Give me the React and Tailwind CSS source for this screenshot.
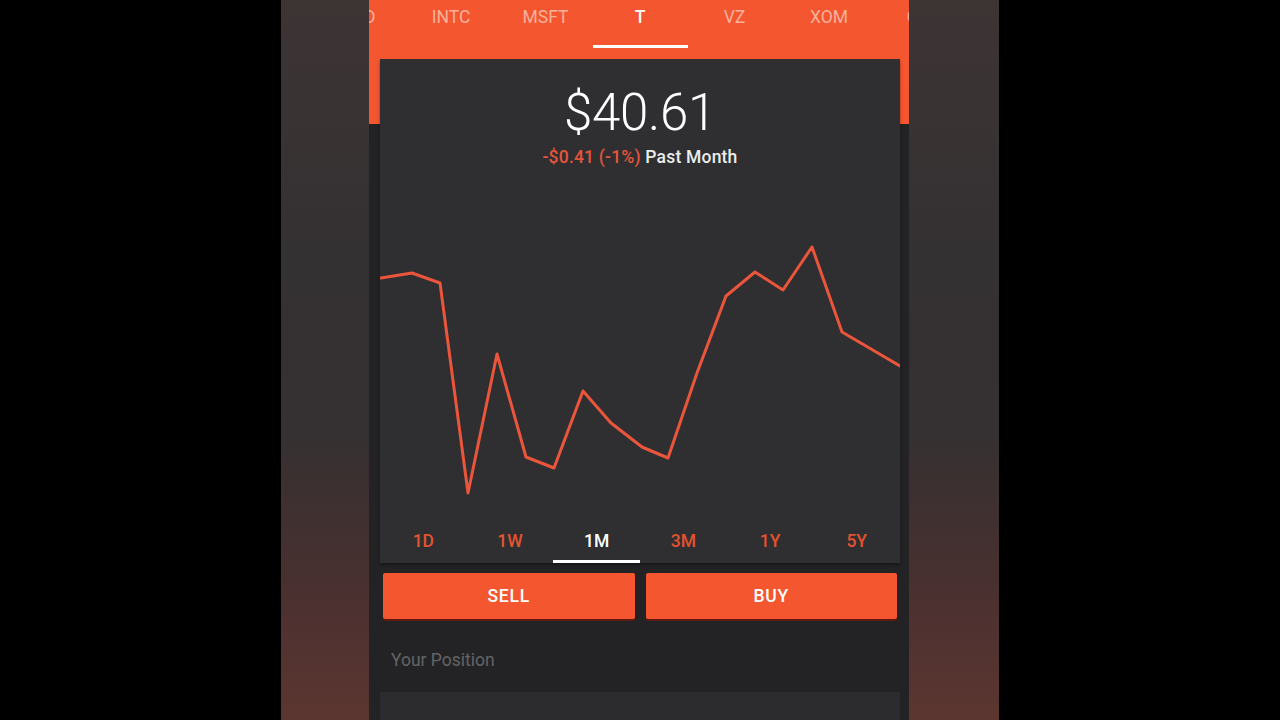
import React from "react";

const tickers = ["AMD", "INTC", "MSFT", "T", "VZ", "XOM", "CVX"];
const ranges = ["1D", "1W", "1M", "3M", "1Y", "5Y"];
const pts = [
  [1, 93], [32, 88], [60, 98], [88, 308], [117, 169], [146, 272], [174, 283],
  [203, 206], [231, 238], [262, 262], [288, 273], [317, 188], [346, 111],
  [375, 87], [403, 105], [432, 62], [462, 147], [520, 181],
];

export default function App() {
  const font = { fontFamily: "Roboto, 'Noto Sans', sans-serif" };
  return (
    <div className="w-[1280px] h-[720px] bg-black flex justify-center overflow-hidden" style={font}>
      <div className="w-[718px] h-full bg-[linear-gradient(to_bottom,#3d3434_0%,#343132_35%,#353031_60%,#4a3030_82%,#5c3630_100%)] flex pl-[88px]">
        <div className="w-[540px] h-full bg-[#232325] flex flex-col overflow-hidden">
          {/* Header */}
          <div className="h-[124px] bg-[#f4562f] shrink-0">
            <div className="h-[48px] flex justify-center overflow-hidden pl-[2px]">
              {tickers.map((t) => (
                <div key={t} className="w-[94.5px] shrink-0 flex flex-col items-center">
                  <div
                    className={
                      "h-[45px] pt-[6px] text-[17.5px] leading-[22px] " +
                      (t === "T" ? "text-white font-medium" : "text-[#fbb19c]")
                    }
                  >
                    {t}
                  </div>
                  {t === "T" && <div className="w-[95px] h-[3px] bg-white" />}
                </div>
              ))}
            </div>
          </div>

          {/* Card */}
          <div className="-mt-[65px] ml-[11px] w-[520px] bg-[#2f2f31] shadow-[0_2px_3px_rgba(0,0,0,0.35)] flex flex-col items-center shrink-0">
            <div className="pt-[26px] text-[51px] leading-[56px] font-light text-white tracking-[-0.3px]">
              $40.61
            </div>
            <div className="mt-[6px] text-[17.5px] leading-[20px] font-medium tracking-[0.2px]">
              <span className="text-[#e3553a]">-$0.41 (-1%)</span>
              <span className="text-[#ececec]"> Past Month</span>
            </div>
            <svg width="520" height="335" viewBox="0 0 520 335" className="mt-[18px] block">
              <polyline
                points={pts.map((p) => p.join(",")).join(" ")}
                fill="none"
                stroke="#ea553b"
                strokeWidth="3"
                strokeLinejoin="round"
                strokeLinecap="round"
              />
            </svg>
            <div className="w-full h-[43px] flex">
              {ranges.map((r) => (
                <div key={r} className="flex-1 flex flex-col items-center justify-between">
                  <div
                    className={
                      "pt-[11px] text-[17.5px] leading-[20px] font-medium " +
                      (r === "1M" ? "text-white" : "text-[#e4532f]")
                    }
                  >
                    {r}
                  </div>
                  {r === "1M" && <div className="w-full h-[3px] bg-white" />}
                </div>
              ))}
            </div>
          </div>

          {/* Buttons */}
          <div className="ml-[11px] w-[520px] mt-[10px] px-[3px] flex gap-[11px] shrink-0">
            <button className="flex-1 h-[46px] bg-[#f4562f] rounded-[2px] shadow-[0_2px_0_#5e1a10] text-white font-medium text-[17.5px] tracking-[0.8px]">
              SELL
            </button>
            <button className="flex-1 h-[46px] bg-[#f4562f] rounded-[2px] shadow-[0_2px_0_#5e1a10] text-white font-medium text-[17.5px] tracking-[0.8px]">
              BUY
            </button>
          </div>

          <div className="ml-[11px] w-[520px] h-[73px] pt-[31px] pl-[11px] text-[17.5px] leading-[20px] text-[#646466] shrink-0">
            Your Position
          </div>
          <div className="ml-[11px] w-[520px] flex-1 bg-[#2c2c2e]" />
        </div>
      </div>
    </div>
  );
}
